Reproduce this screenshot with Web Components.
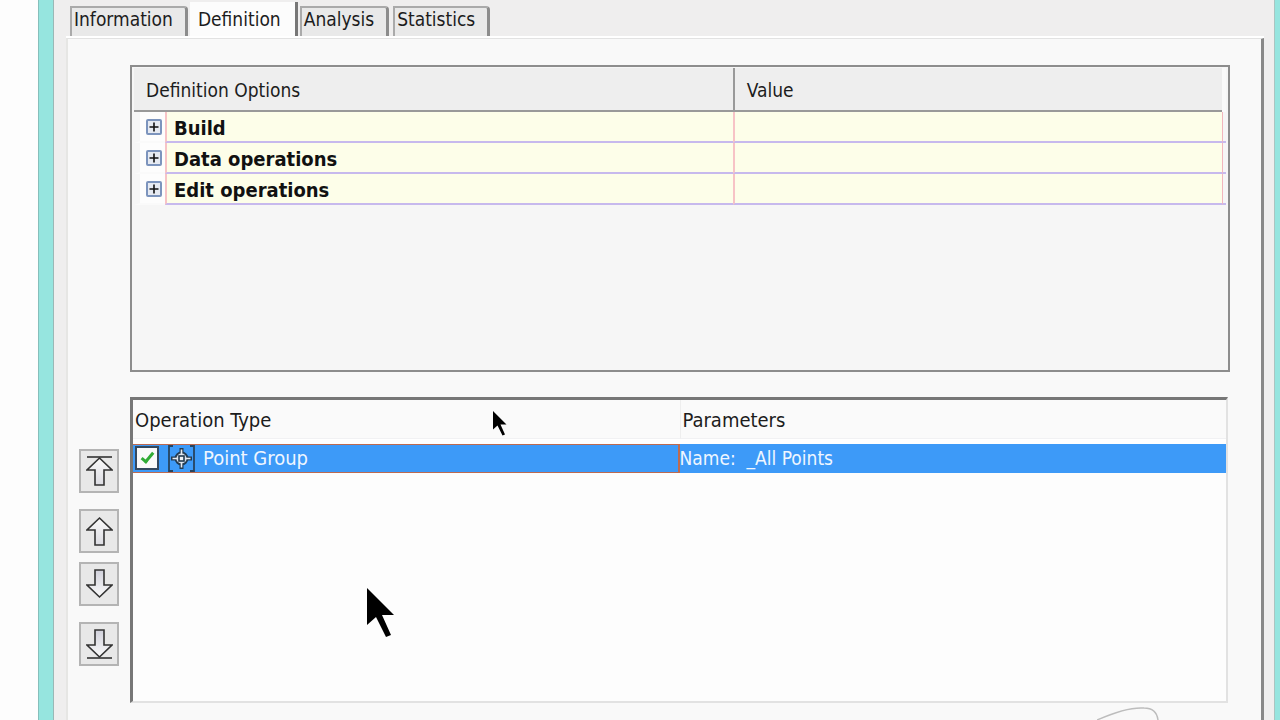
<!DOCTYPE html>
<html lang="en">
<head>
<meta charset="utf-8">
<title>Surface Properties</title>
<style>
    body{
        margin: 0;
        background-color: #fdfdfd;
        color: #1c1c1c;
        font: 19px/24px "DejaVu Sans Condensed", "Noto Sans", sans-serif;
    }
</style>
</head>
<body>
<properties-window>
    <tab-bar slot="tabs">
        <tab-item>Information</tab-item>
        <tab-item active>Definition</tab-item>
        <tab-item>Analysis</tab-item>
        <tab-item>Statistics</tab-item>
    </tab-bar>
    <definition-options></definition-options>
    <operation-list></operation-list>
</properties-window>
<mouse-pointer style="left: 493px; top: 411px; width: 14px"></mouse-pointer>
<mouse-pointer style="left: 367px; top: 588px; width: 28px"></mouse-pointer>

<script>
class BaseElement extends HTMLElement {
    constructor(){
        super();
        this.attachShadow({mode: 'open'});
        this.shadowRoot.innerHTML = this.getTemplate();
    }
}

// outer frame and the tab page
class PropertiesWindow extends BaseElement {
    getTemplate(){
        return `
            <style>
                :host{
                    display: flex;
                    flex-direction: column;
                    box-sizing: border-box;
                    min-height: 100vh;
                    margin-left: 39px;
                    padding: 0 11px 0 13px;
                    background-color: #efeeee;
                    border-left: 14px solid #96e5df;
                    border-right: 5px solid #96e5df;
                    box-shadow: -1px 0 0 #86bfbb, inset 1px 0 0 #9ab8b6, inset -1px 0 0 #a9c5c2;
                }

                .Page{
                    position: relative;
                    flex: 1;
                    display: flex;
                    flex-direction: column;
                    gap: 25px;
                    padding: 26px 31px 17px 11px;
                    background-color: #f9f9f9;
                    border-left: 2px solid #e6e6e4;
                    border-right: 3px solid #888;
                    border-top: 1px solid #e2e2e2;
                    box-shadow: 0 -2px 0 #fff;
                }

                .Curve{
                    position: absolute;
                    right: 96px;
                    bottom: 0;
                    width: 68px;
                    height: 14px;
                }
            </style>
            <slot name="tabs"></slot>
            <div class="Page">
                <slot></slot>
                <svg class="Curve" viewBox="0 0 68 14" fill="none" stroke="#bdbdbd" stroke-width="1.5">
                    <path d="M0 14C18 6 34 1 47 2C55 2 60 6 61 14"/>
                </svg>
            </div>
        `;
    }
}

class TabBar extends BaseElement {
    getTemplate(){
        return `
            <style>
                :host{
                    display: flex;
                    gap: 4px;
                    height: 38px;
                    padding-left: 4px;
                }
            </style>
            <slot></slot>
        `;
    }

    connectedCallback(){
        this.setAttribute("role", "tablist");
    }
}

class TabItem extends BaseElement {
    getTemplate(){
        return `
            <style>
                :host{
                    display: flex;
                    align-items: flex-start;
                    padding-top: 6px;
                }

                button{
                    font: inherit;
                    color: inherit;
                    height: 30px;
                    margin: 0;
                    padding: 0 12px 6px 2px;
                    line-height: 22px;
                    background-color: #e9e9e9;
                    border: 2px solid #aaa;
                    border-right: 3px solid #8c8c8c;
                    border-bottom: none;
                    border-radius: 0 4px 0 0;
                    outline: none;
                }

                /* the open tab reaches over the page's top edge */
                :host([active]){
                    position: relative;
                    margin: 0 -2px;
                    padding-top: 2px;
                }

                :host([active]) button{
                    height: 37px;
                    padding: 0 14px 3px 8px;
                    background-color: #fcfcfc;
                    border: none;
                    border-right: 3px solid #777;
                    border-radius: 0;
                }
            </style>
            <button type="button" role="tab"><slot></slot></button>
        `;
    }
}

class DefinitionOptions extends BaseElement {
    getTemplate(){
        var rows = ["Build", "Data operations", "Edit operations"].map(name => `
            <tr>
                <td><button type="button" aria-label="Expand ${name}">
                    <svg width="16" height="16" viewBox="0 0 16 16">
                        <rect x="1" y="1" width="14" height="14" rx="1" fill="#e6eaf2" stroke="#7c94bd" stroke-width="2"/>
                        <path d="M3.5 8H12.5M8 3.5V12.5" stroke="#111" stroke-width="1.6"/>
                    </svg>
                </button></td>
                <th scope="row">${name}</th>
                <td class="Value"></td>
                <td class="End"></td>
            </tr>
        `).join("");

        return `
            <style>
                :host{
                    display: block;
                    flex: 1 1 200px;
                    margin-left: 51px;
                    padding: 1px 2px;
                    background-color: #f6f6f6;
                    border: 2px solid #8d8d8d;
                    box-sizing: border-box;
                }

                table{
                    width: 100%;
                    table-layout: fixed;
                    border-spacing: 0;
                    text-align: left;
                }

                .Gutter{ width: 31px; }
                .Name{ width: 52%; }
                .Edge{ width: 4px; }

                th, td{
                    box-sizing: border-box;
                    padding: 0;
                }

                thead th{
                    height: 44px;
                    padding: 2px 0 0 12px;
                    font-weight: normal;
                    background-color: #eee;
                    border-bottom: 2px solid #999;
                }

                thead th + th{
                    border-left: 2px solid #999;
                }

                thead td{
                    background-color: #fafafa;
                }

                tbody td, tbody th{
                    height: 31px;
                    border-bottom: 2px solid #c7b9ed;
                }

                tbody td:first-child{
                    background-color: #fdfdfd;
                    border-left: 6px solid #f6f6f6;
                    border-bottom-color: #fafafa;
                }

                tbody th{
                    padding: 2px 0 0 7px;
                    color: #111;
                    font-size: 20px;
                }

                tbody th, .Value{
                    background-color: #fdfee9;
                    border-left: 2px solid #f7c3c6;
                }

                .End{
                    border-left: 1px solid #f2b6bd;
                }

                button{
                    display: block;
                    width: 16px;
                    height: 16px;
                    margin: 1px 0 0 6px;
                    padding: 0;
                    border: none;
                    background: none;
                }

                svg{
                    display: block;
                }
            </style>
            <table>
                <colgroup><col class="Gutter"><col class="Name"><col><col class="Edge"></colgroup>
                <thead>
                    <tr><th colspan="2">Definition Options</th><th>Value</th><td></td></tr>
                </thead>
                <tbody>${rows}</tbody>
            </table>
        `;
    }
}

class MoveButton extends BaseElement {
    getTemplate(){
        var down = this.getAttribute("direction") == "down";
        var bar = this.hasAttribute("end");
        var label = "Move " + (bar ? "to " + (down ? "bottom" : "top") : (down ? "down" : "up"));
        var shape = down
            ? "M9 1H18V16H26L13.5 28L1 16H9Z"
            : "M9 29H18V14H26L13.5 2L1 14H9Z";
        var line = down ? "M1 29H26" : "M1 1H26";

        return `
            <style>
                :host{
                    display: block;
                }

                button{
                    display: flex;
                    align-items: center;
                    justify-content: center;
                    width: 40px;
                    height: 44px;
                    padding: 0;
                    background-color: #e8e8e8;
                    border: 2px solid #b4b4b4;
                    outline: none;
                }
            </style>
            <button type="button" aria-label="${label}">
                <svg width="27" height="30" viewBox="0 0 27 30">
                    <defs>
                        <linearGradient id="shade" x2="0" y2="1">
                            <stop offset="0" stop-color="${down ? "#d2d2dc" : "#fafafa"}"/>
                            <stop offset="1" stop-color="${down ? "#fafafa" : "#dcdce2"}"/>
                        </linearGradient>
                    </defs>
                    <path d="${shape}" fill="url(#shade)" stroke="#333" stroke-width="1.6"/>
                    ${bar ? `<path d="${line}" stroke="#333" stroke-width="1.6"/>` : ""}
                </svg>
            </button>
        `;
    }
}

class OperationList extends BaseElement {
    getTemplate(){
        return `
            <style>
                :host{
                    display: flex;
                    flex: 1 1 200px;
                    gap: 11px;
                    margin-right: 2px;
                }

                .Buttons{
                    display: flex;
                    flex-direction: column;
                    gap: 16px;
                    padding-top: 52px;
                }

                .Pair{
                    display: flex;
                    flex-direction: column;
                    gap: 9px;
                }

                .List{
                    flex: 1;
                    background-color: #fdfdfd;
                    border: 3px solid #777;
                    border-right: 2px solid #e2e2e2;
                    border-bottom: 2px solid #e2e2e2;
                }

                table{
                    width: 100%;
                    table-layout: fixed;
                    border-spacing: 0;
                    text-align: left;
                }

                th, td{
                    box-sizing: border-box;
                    padding: 0;
                }

                th{
                    height: 39px;
                    padding: 2px 0 0 2px;
                    font-size: 20px;
                    font-weight: normal;
                    background-color: #fafafa;
                    border-bottom: 1px solid #f1f1f3;
                }

                th + th{
                    border-left: 1px solid #eee;
                }

                .Space td{
                    height: 5px;
                    background-color: #fff;
                }

                .Selected td{
                    height: 29px;
                    color: #eff6ff;
                    background-color: #3d9af8;
                }

                .Selected td:first-child{
                    border: solid #bd6a50;
                    border-width: 1px 2px 1px 0;
                }

                label{
                    display: flex;
                    align-items: center;
                    height: 27px;
                    padding-left: 2px;
                    font-size: 20px;
                }

                input{
                    appearance: none;
                    width: 24px;
                    height: 24px;
                    margin: 0 9px 0 0;
                    background-color: #fafafa;
                    border: 2px solid #34495f;
                }

                /* tick drawn from two borders */
                input:checked::before{
                    content: "";
                    display: block;
                    width: 4px;
                    height: 10px;
                    margin: 2px 0 0 7px;
                    border: solid #31ac36;
                    border-width: 0 3px 3px 0;
                    transform: rotate(40deg);
                }

                label svg{
                    margin-right: 8px;
                }
            </style>
            <div class="Buttons">
                <move-button direction="up" end></move-button>
                <div class="Pair">
                    <move-button direction="up"></move-button>
                    <move-button direction="down"></move-button>
                </div>
                <move-button direction="down" end></move-button>
            </div>
            <div class="List">
                <table>
                    <thead>
                        <tr><th>Operation Type</th><th>Parameters</th></tr>
                    </thead>
                    <tbody>
                        <tr class="Space"><td colspan="2"></td></tr>
                        <tr class="Selected">
                            <td><label>
                                <input type="checkbox" checked>
                                <svg width="27" height="27" viewBox="0 0 27 27" fill="none">
                                    <path d="M5 1H1V26H5M22 1H26V26H22" stroke="#27445f" stroke-width="1.8"/>
                                    <path d="M13.5 3V24M3 13.5H24" stroke="#243b50" stroke-width="4"/>
                                    <circle cx="13.5" cy="13.5" r="6" fill="#d5dde8" stroke="#243b50" stroke-width="1.8"/>
                                    <path d="M13.5 4.5V22.5M4.5 13.5H22.5" stroke="#e6ebf2" stroke-width="1.6"/>
                                    <rect x="11" y="11" width="5" height="5" fill="#eef1f5" stroke="#243b50" stroke-width="1.6"/>
                                </svg>
                                <span>Point Group</span>
                            </label></td>
                            <td>Name:&nbsp; _All Points</td>
                        </tr>
                    </tbody>
                </table>
            </div>
        `;
    }
}

class MousePointer extends BaseElement {
    getTemplate(){
        return `
            <style>
                :host{
                    display: block;
                    position: absolute;
                    pointer-events: none;
                }

                svg{
                    display: block;
                    width: 100%;
                }
            </style>
            <svg viewBox="0 0 28 50">
                <path d="M0 0L27 27H15L24 47L19 49L9 29L0 37Z" fill="#000"/>
            </svg>
        `;
    }
}

window.customElements.define("properties-window", PropertiesWindow);
window.customElements.define("tab-bar", TabBar);
window.customElements.define("tab-item", TabItem);
window.customElements.define("definition-options", DefinitionOptions);
window.customElements.define("move-button", MoveButton);
window.customElements.define("operation-list", OperationList);
window.customElements.define("mouse-pointer", MousePointer);
</script>
</body>
</html>
